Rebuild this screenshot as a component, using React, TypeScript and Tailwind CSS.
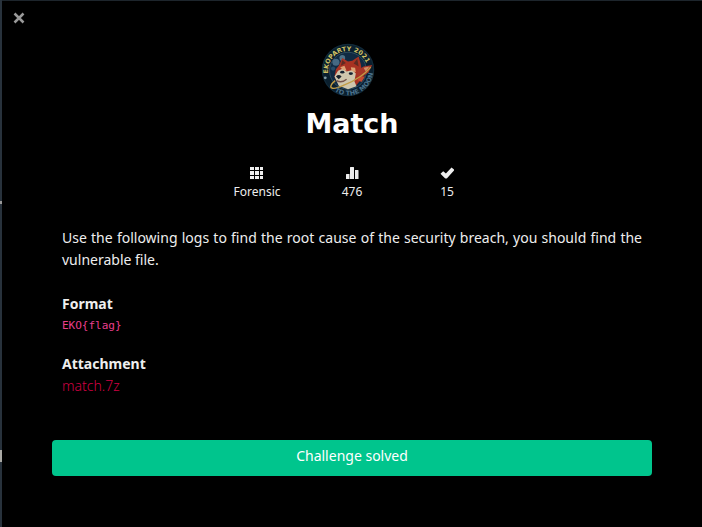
import React from "react";

function Logo() {
  return (
    <svg viewBox="0 0 76 76" className="mr-2 size-[54px]" role="img" aria-label="Ekoparty 2021 To the moon">
      <defs>
        <path id="arc-top" d="M10 43 A28 28 0 0 1 66 36" />
        <path id="arc-bottom" d="M19 68 A35 35 0 0 0 73 42" />
      </defs>
      <circle cx="38" cy="38" r="37" fill="#0a1f2e" />
      <circle cx="38" cy="38" r="36" fill="none" stroke="#17303f" strokeWidth="1" />
      <circle cx="38" cy="39" r="26" fill="#102a42" stroke="#3b5a6d" strokeWidth="1" />
      <circle cx="21" cy="27" r="5" fill="#456983" />
      <circle cx="30" cy="21" r="4" fill="#4e7086" />
      <circle cx="17" cy="36" r="3" fill="#264b67" />
      <circle cx="6" cy="49" r="2" fill="#819ba5" />
      <g>
        <path d="M21 37 L25 32 L30 21 L38 26 L44 25 L53 19 L56 30 L58 44 L56 52 L49 60 L36 62 L24 56 L19 48Z" fill="#a83222" />
        <path d="M30 24 L28 32 L35 28Z M51 22 L46 29 L53 33Z" fill="#5e2a22" />
        <path d="M19 47 L24 39 L31 36 L36 40 L44 38 L49 43 L47 54 L50 61 L38 65 L25 60Z" fill="#cfc6ad" />
        <path d="M27 34 L33 32 L36 39 L31 38Z M42 34 L48 35 L49 41 L43 39Z" fill="#dda273" />
        <ellipse cx="30" cy="41" rx="3" ry="2" fill="#172231" />
        <ellipse cx="42" cy="43" rx="3" ry="2" fill="#172231" />
        <path d="M21 47 Q25 43 29 47 L25 51Z" fill="#18202a" />
        <path d="M22 53 Q29 57 36 51" fill="none" stroke="#75524a" strokeWidth="2" />
      </g>
      <path d="M52 38 L60 33 L72 31 L67 41 L57 49 L51 46Z" fill="#a83527" />
      <path d="M60 35 L68 33 L63 40Z" fill="#cf8f68" />
      <path d="M56 47 L62 47 L57 55 L51 52Z" fill="#c6492f" />
      <path d="M20 53 C8 63 14 68 33 59 C48 53 61 45 70 34" fill="none" stroke="#c29c45" strokeWidth="2" />
      <text fill="#cfc063" fontSize="9" fontWeight="700" className="font-['DejaVu_Sans',sans-serif]">
        <textPath href="#arc-top">EKOPARTY 2021</textPath>
      </text>
      <text fill="#4a718b" fontSize="9" fontWeight="700" className="font-['DejaVu_Sans',sans-serif]">
        <textPath href="#arc-bottom">TO THE MOON</textPath>
      </text>
    </svg>
  );
}

function GridIcon() {
  return (
    <svg viewBox="0 0 14 14" className="size-3.5" fill="currentColor" aria-hidden="true">
      <path d="M0 1h4v3H0zM5 1h4v3H5zM10 1h3v3h-3zM0 5h4v4H0zM5 5h4v4H5zM10 5h3v4h-3zM0 10h4v3H0zM5 10h4v3H5zM10 10h3v3h-3z" />
    </svg>
  );
}

function StatsIcon() {
  return (
    <svg viewBox="0 0 14 14" className="size-3.5" fill="currentColor" aria-hidden="true">
      <path d="M1 8.500a.5.500 0 0 1 .5-.5h3v5H1zM5 1.500a.5.500 0 0 1 .5-.5h3a.5.500 0 0 1 .5.500V13H5zM10 4h3a.5.500 0 0 1 .5.500V13H10z" />
    </svg>
  );
}

function CheckIcon() {
  return (
    <svg viewBox="0 0 14 14" className="size-3.5" fill="currentColor" aria-hidden="true">
      <path d="M11.500 1.500 14.500 4 7 12.200Q6 13 5 12.200L.5 7.700 3.200 5.200 5.900 7.400Z" />
    </svg>
  );
}

const stats = [
  { icon: <GridIcon />, label: "Forensic" },
  { icon: <StatsIcon />, label: "476" },
  { icon: <CheckIcon />, label: "15" },
];

export default function App() {
  return (
    <div className="flex min-h-screen bg-black font-['Noto_Sans',sans-serif] text-sm leading-[22px] text-[#eeeeee]">
      <div aria-hidden="true" className="flex w-0.5 shrink-0 flex-col bg-[#28323c]">
        <div className="mt-[201px] h-[3px] bg-[#999999]" />
        <div className="mt-[246px] h-3 bg-[#aaa9a5]" />
      </div>
      <main className="flex min-w-0 grow flex-col border-t border-[#1d252c] px-[50px] pb-12">
        <div className="-ml-[41px] flex h-[42px] items-start pt-[9px]">
          <button type="button" aria-label="Close" className="flex size-4 items-center justify-center text-[#999999]">
            <svg viewBox="0 0 12 12" className="size-3" fill="none" stroke="currentColor" strokeWidth="2.500" aria-hidden="true">
              <path d="M1.500 1.500 10.500 10.500M10.500 1.500 1.500 10.500" />
            </svg>
          </button>
        </div>
        <header className="flex flex-col items-center">
          <Logo />
          <h1 className="mt-[11px] font-['DejaVu_Sans',sans-serif] text-[27px] leading-8 font-bold text-white">Match</h1>
          <ul className="mt-[26px] flex">
            {stats.map((stat) => (
              <li key={stat.label} className="flex w-[95px] flex-col items-center text-xs leading-6">
                {stat.icon}
                {stat.label}
              </li>
            ))}
          </ul>
        </header>
        <section className="mt-[23px] px-2.5">
          <p className="text-justify">
            Use the following logs to find the root cause of the security breach, you should find the vulnerable file.
          </p>
          <h2 className="mt-[22px] font-bold">Format</h2>
          <p>
            <code className="block font-['DejaVu_Sans_Mono',monospace] text-[11px] text-[#e83e8c]">EKO&#123;flag&#125;</code>
          </p>
          <h2 className="mt-4 font-bold">Attachment</h2>
          <a href="#match" className="font-light text-[#d00043]">match.7z</a>
        </section>
        <button type="button" className="mt-[43px] flex h-9 w-full justify-center rounded bg-[#00c58d] pt-[5px] text-white">
          Challenge solved
        </button>
      </main>
    </div>
  );
}
